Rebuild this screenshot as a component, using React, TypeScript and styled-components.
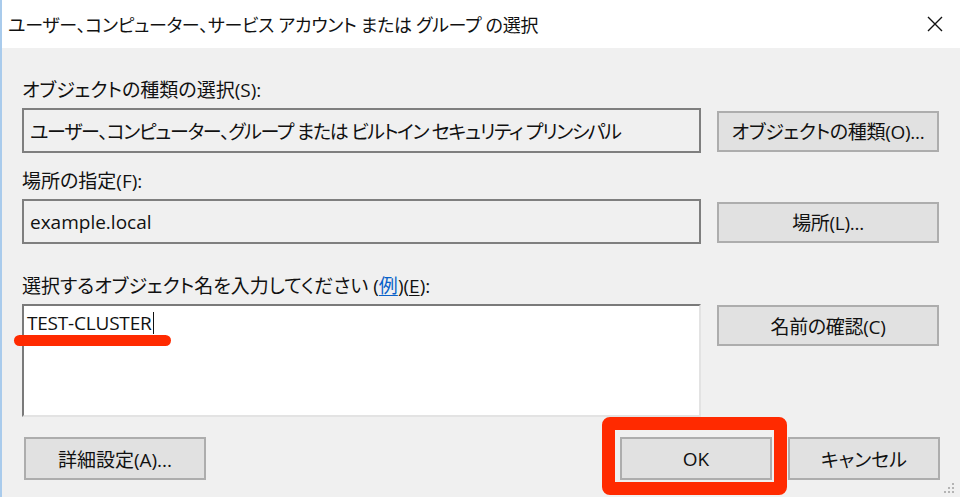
import styled, { createGlobalStyle } from 'styled-components';

const GlobalStyle = createGlobalStyle`
	html, body {
		margin: 0;
		padding: 0;
		background: #f0f0f0;
	}
	body {
		font-family: 'Open Sans', 'Noto Sans CJK JP', sans-serif;
		font-feature-settings: 'palt';
		color: #111;
	}
`;

const CloseIcon = () => (
	<svg width='18' height='18' viewBox='0 0 18 18'>
		<path d='M2 2 L16 16 M16 2 L2 16' stroke='#111' strokeWidth='1.4' />
	</svg>
);

const SizeGrip = () => (
	<svg width='14' height='14' viewBox='0 0 14 14'>
		<rect x='10' y='2' width='2' height='2' fill='#b4b4b4' />
		<rect x='6' y='6' width='2' height='2' fill='#b4b4b4' />
		<rect x='10' y='6' width='2' height='2' fill='#b4b4b4' />
		<rect x='2' y='10' width='2' height='2' fill='#b4b4b4' />
		<rect x='6' y='10' width='2' height='2' fill='#b4b4b4' />
		<rect x='10' y='10' width='2' height='2' fill='#b4b4b4' />
	</svg>
);

const App = () => {
	return (
		<Window>
			<GlobalStyle />
			<TitleBar>
				<Title>ユーザー、コンピューター、サービス アカウント または グループ の選択</Title>
				<CloseButton>
					<CloseIcon />
				</CloseButton>
			</TitleBar>
			<Body>
				<Label>オブジェクトの種類の選択(S):</Label>
				<FieldRow>
					<ReadOnlyBox $tight>
						ユーザー、コンピューター、グループ または ビルトイン セキュリティ プリンシパル
					</ReadOnlyBox>
					<SideButton>オブジェクトの種類(O)...</SideButton>
				</FieldRow>

				<Label $gap={15}>場所の指定(F):</Label>
				<FieldRow>
					<ReadOnlyBox>example.local</ReadOnlyBox>
					<SideButton>場所(L)...</SideButton>
				</FieldRow>

				<Label $gap={29}>
					選択するオブジェクト名を入力してください (<Link>例</Link>)(<u>E</u>):
				</Label>
				<FieldRow $top>
					<EditArea>
						<EditText>
							TEST-CLUSTER
							<Caret />
						</EditText>
						<Underline />
					</EditArea>
					<SideButton>名前の確認(C)</SideButton>
				</FieldRow>

				<BottomRow>
					<AdvancedButton>詳細設定(A)...</AdvancedButton>
					<DialogButtons>
						<Highlighted>
							<DialogButton>OK</DialogButton>
							<HighlightFrame />
						</Highlighted>
						<DialogButton>キャンセル</DialogButton>
					</DialogButtons>
				</BottomRow>
			</Body>
			<Grip>
				<SizeGrip />
			</Grip>
		</Window>
	);
};

const Window = styled.div`
	position: relative;
	width: 960px;
	height: 497px;
	overflow: hidden;
	box-sizing: border-box;
	border-left: 2px solid #a9cbec;
	background: #f0f0f0;
	display: flex;
	flex-direction: column;
`;

const TitleBar = styled.div`
	height: 48px;
	flex-shrink: 0;
	background: #ffffff;
	display: flex;
	align-items: center;
	justify-content: space-between;
	padding: 0 16px 0 6px;
`;

const Title = styled.div`
	font-size: 18px;
	letter-spacing: -0.3px;
	white-space: nowrap;
`;

const CloseButton = styled.div`
	display: flex;
	align-items: center;
	justify-content: center;
	width: 18px;
	height: 18px;
`;

const Body = styled.div`
	flex: 1;
	padding: 29px 20px 0 20px;
	display: flex;
	flex-direction: column;
`;

const Label = styled.div<{ $gap?: number }>`
	height: 26px;
	line-height: 26px;
	font-size: 19px;
	margin-top: ${props => props.$gap ?? 0}px;
	margin-bottom: 5px;
	white-space: nowrap;

	u {
		text-decoration: underline;
		text-underline-offset: 2px;
	}
`;

const Link = styled.span`
	color: #0a62c9;
	text-decoration: underline;
	text-underline-offset: 2px;
`;

const FieldRow = styled.div<{ $top?: boolean }>`
	display: grid;
	grid-template-columns: 679px 222px;
	column-gap: 16px;
	align-items: ${props => (props.$top ? 'start' : 'center')};
`;

const ReadOnlyBox = styled.div<{ $tight?: boolean }>`
	box-sizing: border-box;
	height: 45px;
	border: 2px solid #7f7f7f;
	background: #f0f0f0;
	padding: 0 6px;
	display: flex;
	align-items: center;
	font-size: 19px;
	letter-spacing: ${props => (props.$tight ? '-1.3px' : '0')};
	white-space: nowrap;
	overflow: hidden;
`;

const SideButton = styled.div`
	box-sizing: border-box;
	height: 41px;
	margin-top: 1px;
	border: 2px solid #adadad;
	background: #e1e1e1;
	display: flex;
	align-items: center;
	justify-content: center;
	font-size: 19px;
	letter-spacing: -0.3px;
	white-space: nowrap;
`;

const EditArea = styled.div`
	position: relative;
	box-sizing: border-box;
	height: 113px;
	background: #ffffff;
	border-top: 2px solid #7a7a7a;
	border-left: 2px solid #7a7a7a;
	border-right: 2px solid #e3e3e3;
	border-bottom: 2px solid #e3e3e3;
	padding: 5px 3px;
`;

const EditText = styled.div`
	display: flex;
	align-items: center;
	height: 24px;
	font-size: 19px;
	letter-spacing: -0.2px;
`;

const Caret = styled.span`
	display: inline-block;
	width: 1.5px;
	height: 22px;
	margin-left: 1px;
	background: #111;
`;

const Underline = styled.div`
	position: absolute;
	left: -10px;
	top: 29px;
	width: 157px;
	height: 11px;
	border-radius: 6px;
	background: #ff2a00;
`;

const BottomRow = styled.div`
	margin-top: 20px;
	display: flex;
	justify-content: space-between;
	align-items: center;
`;

const ButtonBase = styled.div`
	box-sizing: border-box;
	height: 43px;
	border: 2px solid #adadad;
	background: #e1e1e1;
	display: flex;
	align-items: center;
	justify-content: center;
	font-size: 19px;
	white-space: nowrap;
`;

const AdvancedButton = styled(ButtonBase)`
	width: 182px;
	margin-left: 2px;
`;

const DialogButtons = styled.div`
	display: flex;
	gap: 16px;
`;

const DialogButton = styled(ButtonBase)`
	width: 152px;
`;

const Highlighted = styled.div`
	position: relative;
`;

const HighlightFrame = styled.div`
	position: absolute;
	left: -18px;
	right: -15px;
	top: -20px;
	bottom: -15px;
	border: 13px solid #ff2a00;
	border-radius: 8px;
	pointer-events: none;
`;

const Grip = styled.div`
	position: absolute;
	right: 4px;
	bottom: 2px;
	display: flex;
`;

export default App;
